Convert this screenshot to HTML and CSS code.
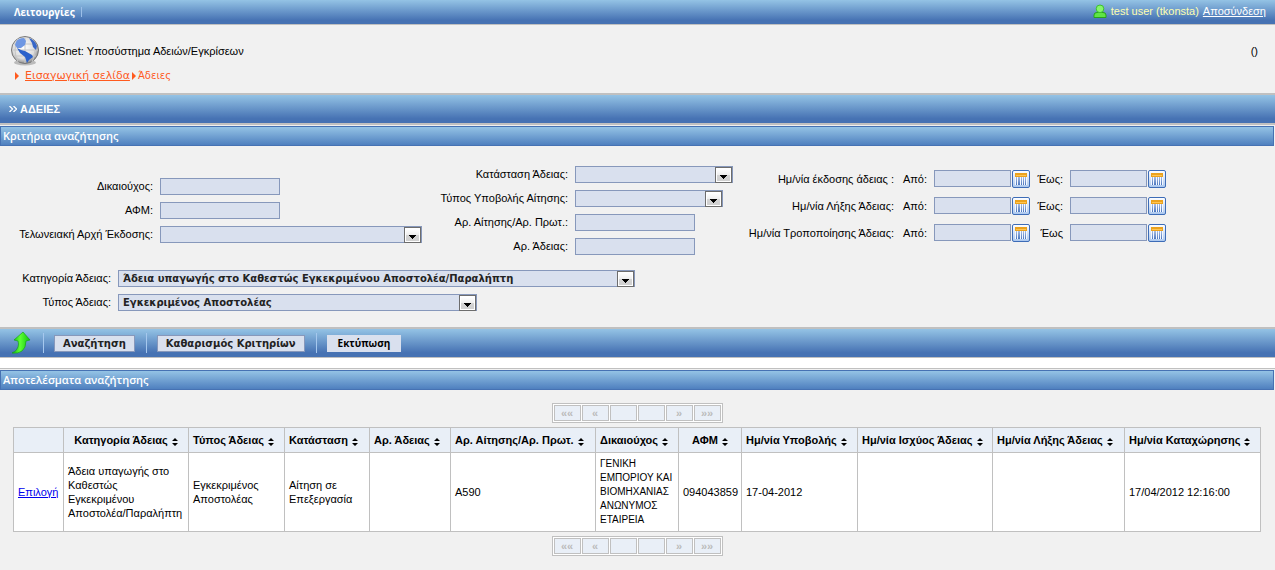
FILE: index.html
```html
<!DOCTYPE html>
<html lang="el">
<head>
<meta charset="utf-8">
<title>ICISnet: Υποσύστημα Αδειών/Εγκρίσεων</title>
<link rel="stylesheet" href="styles.css">
</head>
<body>
<svg class="defs" aria-hidden="true">
  <defs>
    <linearGradient id="btn" x1="0" y1="0" x2="0" y2="1"><stop offset="0" stop-color="#fff"/><stop offset=".5" stop-color="#eee"/><stop offset=".5" stop-color="#d4d4d4"/><stop offset="1" stop-color="#d0d0d0"/></linearGradient>
    <linearGradient id="cell" x1="0" y1="0" x2="0" y2="1"><stop offset="0" stop-color="#fff"/><stop offset="1" stop-color="#a9c6ee"/></linearGradient>
    <linearGradient id="bars" x1="0" y1="0" x2="0" y2="1"><stop offset="0" stop-color="#b4c6e6"/><stop offset="1" stop-color="#4a76bf"/></linearGradient>
    <linearGradient id="green" x1="0" y1="0" x2="1" y2="0"><stop offset="0" stop-color="#12b50c"/><stop offset=".45" stop-color="#5dff35"/><stop offset="1" stop-color="#0fc40c"/></linearGradient>
    <radialGradient id="sphere" cx=".45" cy=".4" r=".6"><stop offset="0" stop-color="#fff"/><stop offset=".7" stop-color="#dcdcdc"/><stop offset="1" stop-color="#8d8d8d"/></radialGradient>
  </defs>
  <symbol id="drop" viewBox="0 0 18 16"><rect x=".5" y=".5" width="16" height="15" fill="#fff" stroke="#6d6d6d"/><rect x="2" y="2" width="13" height="12" fill="url(#btn)"/><path d="M5 8h7v1h-1v1h-1v1h-1v1H8v-1H7v-1H6V9H5z" fill="#000"/></symbol>
  <symbol id="cal" viewBox="0 0 18 18"><rect x=".5" y=".5" width="17" height="17" rx="1.5" fill="url(#cell)" stroke="#3d6cb7"/><rect x="3" y="6" width="12" height="9" fill="#f4f8ff"/><path d="M4 6h1v9H4zM6 6h2v9H6zM9 6h1v9H9zM11 6h1v9h-1zM13 6h1v9h-1z" fill="url(#bars)"/><rect x="3" y="3" width="12" height="4" fill="#eba21d"/><path d="M4 5.500h10" stroke="#ffc552"/></symbol>
  <symbol id="sort" viewBox="0 0 6 8"><path d="M3 0l3 3H0zM3 8L0 5h6z"/></symbol>
</svg>

<header class="topbar">
  <nav class="menu"><a href="#">Λειτουργίες</a></nav>
  <div class="account">
    <svg class="user" viewBox="0 0 14 14"><path d="M1 13.500V11Q1 8.500 4 8.500h6q3 0 3 2.500v2.500z" fill="#5fe544" stroke="#27a31a"/><circle cx="7" cy="4.800" r="3.800" fill="#86f56c" stroke="#3cc22c"/></svg>
    <span>test user (tkonsta)</span>
    <a href="#">Αποσύνδεση</a>
  </div>
</header>

<div class="masthead">
  <div class="brand">
    <svg class="globe" viewBox="0 0 30 30"><ellipse cx="15" cy="26.500" rx="11" ry="3" fill="#bbb"/><circle cx="15" cy="14" r="13.500" fill="url(#sphere)" stroke="#777"/><path d="M2 14h26M4 8h22M4 20h22M15 1v26M8 2q-6 12 0 24M22 2q6 12 0 24" fill="none" stroke="#c6c6c6"/><path d="M6 6q2-4 8-4l2 3-1 4-4 3-4 0-2-3z" fill="#6e97e3"/><path d="M19 2q6 2 8 8l-1 4-3-3-1-4z" fill="#3767c8"/><path d="M7 12l4 2 4 1 7 4 1 2-4 3-2 3-2-6-5-4z" fill="#2a61cb"/></svg>
    <span>ICISnet: Υποσύστημα Αδειών/Εγκρίσεων</span>
    <span class="office">()</span>
  </div>
  <nav class="crumbs"><i class="arrow"></i><a href="#">Εισαγωγική σελίδα</a><i class="arrow near"></i><span>Άδειες</span></nav>
</div>

<h1 class="pagetitle"><svg class="chev" viewBox="0 0 8 6"><path d="M.5 0l3 3-3 3M4.500 0l3 3-3 3" fill="none" stroke="#fff" stroke-width="1.300"/></svg>ΑΔΕΙΕΣ</h1>

<h2 class="section">Κριτήρια αναζήτησης</h2>
<form class="criteria">
  <div class="groups">
    <div class="group g1">
      <label for="f1">Δικαιούχος:</label><input id="f1" type="text">
      <label for="f2">ΑΦΜ:</label><input id="f2" type="text">
      <label for="f3">Τελωνειακή Αρχή Έκδοσης:</label><div class="pick w262"><select id="f3"><option></option></select><svg><use href="#drop"/></svg></div>
    </div>
    <div class="group g2">
      <label for="f4">Κατάσταση Άδειας:</label><div class="pick w158"><select id="f4"><option></option></select><svg><use href="#drop"/></svg></div>
      <label for="f5">Τύπος Υποβολής Αίτησης:</label><div class="pick w148"><select id="f5"><option></option></select><svg><use href="#drop"/></svg></div>
      <label for="f6">Αρ. Αίτησης/Αρ. Πρωτ.:</label><input id="f6" type="text">
      <label for="f7">Αρ. Άδειας:</label><input id="f7" type="text">
    </div>
    <div class="dates">
      <span>Ημ/νία έκδοσης άδειας :</span><label for="d1">Από:</label><div class="date"><input id="d1" type="text"><button type="button" aria-label="Ημερολόγιο"><svg><use href="#cal"/></svg></button></div><label for="d2">Έως:</label><div class="date"><input id="d2" type="text"><button type="button" aria-label="Ημερολόγιο"><svg><use href="#cal"/></svg></button></div>
      <span>Ημ/νία Λήξης Άδειας:</span><label for="d3">Από:</label><div class="date"><input id="d3" type="text"><button type="button" aria-label="Ημερολόγιο"><svg><use href="#cal"/></svg></button></div><label for="d4">Έως:</label><div class="date"><input id="d4" type="text"><button type="button" aria-label="Ημερολόγιο"><svg><use href="#cal"/></svg></button></div>
      <span>Ημ/νία Τροποποίησης Άδειας:</span><label for="d5">Από:</label><div class="date"><input id="d5" type="text"><button type="button" aria-label="Ημερολόγιο"><svg><use href="#cal"/></svg></button></div><label for="d6">Έως</label><div class="date"><input id="d6" type="text"><button type="button" aria-label="Ημερολόγιο"><svg><use href="#cal"/></svg></button></div>
    </div>
  </div>
  <div class="group g3">
    <label for="f8">Κατηγορία Άδειας:</label><div class="pick w517"><select id="f8"><option>Άδεια υπαγωγής στο Καθεστώς Εγκεκριμένου Αποστολέα/Παραλήπτη</option></select><svg><use href="#drop"/></svg></div>
    <label for="f9">Τύπος Άδειας:</label><div class="pick w359"><select id="f9"><option>Εγκεκριμένος Αποστολέας</option></select><svg><use href="#drop"/></svg></div>
  </div>
</form>

<div class="toolbar">
  <svg class="back" viewBox="0 0 20 24"><path d="M12 1l7 8-4 1q0 7-4 10-4 3-10 2 5-2 6-6 1-3 0-6l-4-1z" fill="url(#green)" stroke="#0c9c10" stroke-width=".6"/></svg>
  <i class="bar"></i>
  <button type="button" class="tool">Αναζήτηση</button>
  <i class="bar"></i>
  <button type="button" class="tool">Καθαρισμός Κριτηρίων</button>
  <i class="bar"></i>
  <button type="button" class="tool print">Εκτύπωση</button>
</div>

<h2 class="section">Αποτελέσματα αναζήτησης</h2>
<main class="results">
  <div class="pager"><button type="button">««</button><button type="button">«</button><button type="button" aria-label="Σελίδα"></button><button type="button" aria-label="Σελίδα"></button><button type="button">»</button><button type="button">»»</button></div>
  <table class="list">
    <colgroup><col class="c50"><col class="c125"><col class="c96"><col class="c85"><col class="c81"><col class="c145"><col class="c83"><col class="c63"><col class="c116"><col class="c135"><col class="c132"><col class="c136"></colgroup>
    <thead><tr>
      <th></th>
      <th class="mid">Κατηγορία Άδειας<svg><use href="#sort"/></svg></th>
      <th>Τύπος Άδειας<svg><use href="#sort"/></svg></th>
      <th>Κατάσταση<svg><use href="#sort"/></svg></th>
      <th>Αρ. Άδειας<svg><use href="#sort"/></svg></th>
      <th>Αρ. Αίτησης/Αρ. Πρωτ.<svg><use href="#sort"/></svg></th>
      <th>Δικαιούχος<svg><use href="#sort"/></svg></th>
      <th class="mid">ΑΦΜ<svg><use href="#sort"/></svg></th>
      <th>Ημ/νία Υποβολής<svg><use href="#sort"/></svg></th>
      <th>Ημ/νία Ισχύος Άδειας<svg><use href="#sort"/></svg></th>
      <th>Ημ/νία Λήξης Άδειας<svg><use href="#sort"/></svg></th>
      <th>Ημ/νία Καταχώρησης<svg><use href="#sort"/></svg></th>
    </tr></thead>
    <tbody><tr>
      <td><a href="#">Επιλογή</a></td>
      <td>Άδεια υπαγωγής στο Καθεστώς Εγκεκριμένου Αποστολέα/Παραλήπτη</td>
      <td>Εγκεκριμένος Αποστολέας</td>
      <td>Αίτηση σε Επεξεργασία</td>
      <td></td>
      <td>Α590</td>
      <td class="name">ΓΕΝΙΚΗ<br>ΕΜΠΟΡΙΟΥ ΚΑΙ<br>ΒΙΟΜΗΧΑΝΙΑΣ<br>ΑΝΩΝΥΜΟΣ<br>ΕΤΑΙΡΕΙΑ</td>
      <td>094043859</td>
      <td>17-04-2012</td>
      <td></td>
      <td></td>
      <td>17/04/2012 12:16:00</td>
    </tr></tbody>
  </table>
  <div class="pager"><button type="button">««</button><button type="button">«</button><button type="button" aria-label="Σελίδα"></button><button type="button" aria-label="Σελίδα"></button><button type="button">»</button><button type="button">»»</button></div>
</main>
</body>
</html>
```
FILE: styles.css
```css
* { box-sizing: border-box; }
body {
  margin: 0;
  background: #f1f1f1;
  color: #000;
  font: 11px/14px "Liberation Sans", Arial, sans-serif;
}
input, select, button { font: inherit; border-radius: 0; margin: 0; }
.defs { display: block; width: 0; height: 0; }

.topbar, .pagetitle, .section, .toolbar {
  background: linear-gradient(#94c3e5, #4672b3 85%);
  color: #fff;
}
.topbar {
  display: flex;
  justify-content: space-between;
  align-items: center;
  height: 25px;
  padding: 0 9px 0 14px;
  border-bottom: 1px solid #c0c0c0;
}
.menu { border-right: 1px solid #9cbfe8; padding-right: 6px; line-height: 10px; }
.menu a { color: #fff; text-decoration: none; font: bold 10px/10px "Open Sans", sans-serif; }
.account { display: flex; align-items: center; gap: 4px; padding-bottom: 2px; color: #ffffb0; }
.account a { color: #fff; }
.user { width: 14px; height: 14px; }

.masthead { height: 68px; padding: 11px 17px 0 10px; }
.brand { display: flex; align-items: center; gap: 4px; height: 30px; }
.globe { width: 30px; height: 30px; }
.office { margin-left: auto; }
.crumbs { display: flex; align-items: center; margin-top: 3px; padding-left: 5px; color: #ff5a1e; font: 10px/14px "DejaVu Sans", Verdana, sans-serif; }
.crumbs a { color: inherit; font-size: 11px; }
.arrow { border: 4px solid transparent; border-left: 4px solid #ff5a1e; border-right: 0; margin-right: 6px; }
.near { margin: 0 2px; }

.pagetitle {
  display: flex;
  align-items: center;
  gap: 3px;
  height: 32px;
  margin: 0 0 1px;
  padding-left: 9px;
  border: solid #c0c0c0;
  border-width: 2px 0;
  font: bold 11px/14px "Liberation Sans", Arial, sans-serif;
}
.chev { width: 8px; height: 6px; }
.section {
  height: 20px;
  margin: 0 1px 0 0;
  padding-left: 2px;
  border: 1px solid #4672b3;
  background: linear-gradient(#94c3e5, #4f80bf);
  font: 600 11px/18px "Open Sans", "Noto Sans", sans-serif;
}

.criteria { height: 181px; padding-top: 19px; }
.groups { display: flex; align-items: center; }
.group { display: grid; align-items: center; column-gap: 7px; row-gap: 6px; }
.group label, .dates label, .dates span { text-align: right; white-space: nowrap; }
.g1 { grid-template-columns: 153px 262px; }
.g2 { grid-template-columns: 146px 158px; }
.g3 { grid-template-columns: 111px 1fr; margin-top: 14px; }
.dates { display: grid; grid-template-columns: 161px 26px 96px 26px 96px; column-gap: 7px; row-gap: 8px; align-items: center; padding-bottom: 8px; }
.date { display: flex; gap: 1px; height: 19px; }
.date input { width: 77px; }
.date button { width: 18px; height: 18px; padding: 0; border: 0; background: none; }
.date svg { display: block; width: 18px; height: 18px; }
input, select {
  height: 17px;
  border: 1px solid #8798bb;
  background: #d9e0ee;
  color: #222;
}
.group { grid-auto-rows: 18px; }
input { width: 120px; padding: 0 3px; }
select { display: block; width: 100%; padding: 1px 20px 0 4px; appearance: none; font: bold 10px/14px "DejaVu Sans", Verdana, sans-serif; }
.pick { position: relative; max-width: 100%; }
.pick svg { position: absolute; right: 0; top: 1px; width: 18px; height: 16px; pointer-events: none; }
.w262 { width: 262px; }
.w158 { width: 158px; }
.w148 { width: 148px; }
.w517 { width: 517px; }
.w359 { width: 359px; }

.toolbar {
  display: flex;
  align-items: center;
  height: 31px;
  margin-bottom: 12px;
  padding-left: 11px;
  border: solid #c0c0c0;
  border-width: 2px 0 1px;
  box-shadow: 0 10px #fff, 0 11px #c0c0c0;
}
.back { width: 20px; height: 24px; margin-right: 12px; }
.bar { width: 1px; height: 20px; margin-right: 10px; background: #a6c8ee; }
.tool { height: 17px; margin-right: 11px; padding: 0 8px; border: 1px solid #8798bb; background: #d9e0ee; color: #222; font: bold 10px/15px "DejaVu Sans", Verdana, sans-serif; }
.print { padding: 0 10px; border-color: #d9e0ee; color: #000; font-family: "Open Sans", sans-serif; }

.results { padding: 13px 14px 13px 13px; }
.pager { display: flex; gap: 1px; width: 171px; margin: 0 auto; padding: 1px; border: 1px solid #c0c0c0; background: #fff; }
.pager button { flex: 1; height: 16px; padding: 0; border: 1px solid #c0c0c0; background: #e9eff7; color: #bbb; font: bold 11px/14px "Liberation Sans", Arial, sans-serif; }
.list { width: 100%; margin: 4px 0; border-collapse: collapse; table-layout: fixed; background: #fff; }
.list th, .list td { border: 1px solid #c0c0c0; padding: 4px; text-align: left; }
.list th { height: 25px; padding: 0 4px 1px; background: #e9eff7; white-space: nowrap; }
.list .mid { text-align: center; }
.list td { height: 79px; }
.list .name { font-size: 10px; white-space: nowrap; }
.list th svg { width: 6px; height: 8px; margin-left: 4px; vertical-align: -2px; }
.list a { color: #00e; }
.c50 { width: 50px; } .c125 { width: 125px; } .c96 { width: 96px; } .c85 { width: 85px; }
.c81 { width: 81px; } .c145 { width: 145px; } .c83 { width: 83px; } .c63 { width: 63px; }
.c116 { width: 116px; } .c135 { width: 135px; } .c132 { width: 132px; } .c136 { width: 136px; }
```
